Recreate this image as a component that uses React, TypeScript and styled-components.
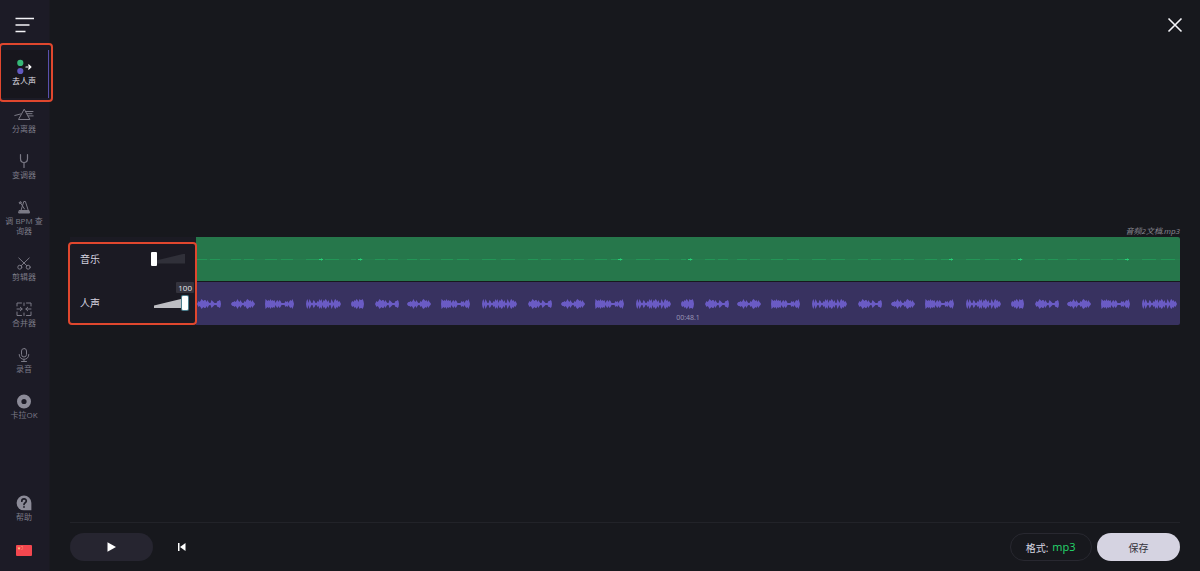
import React, { useState } from "react";
import styled, { createGlobalStyle, css } from "styled-components";

const GlobalStyle = createGlobalStyle`
  *, *::before, *::after { box-sizing: border-box; }
  body {
    margin: 0;
    background: #17181d;
    color: #d6d5e0;
    font-family: "Open Sans", "Noto Sans CJK SC", sans-serif;
  }
  button, select, input { font: inherit; color: inherit; margin: 0; }
  button { padding: 0; border: 0; background: none; cursor: pointer; }
  svg { display: block; }
`;

const Page = styled.div`
  display: grid;
  grid-template-columns: 50px minmax(0, 1fr);
  min-height: 100vh;
`;

const Sidebar = styled.aside`
  display: flex;
  flex-direction: column;
  background: #1c1b26;
  border-right: 1px solid #1a1a21;
`;

const MenuButton = styled.button`
  display: flex;
  align-items: center;
  justify-content: center;
  width: 49px;
  height: 50px;
`;

const Nav = styled.nav`
  display: flex;
  flex-direction: column;
  flex: 1;
`;

const highlightFrame = css`
  &::after {
    content: "";
    position: absolute;
    z-index: 2;
    border: 2px solid #e0472e;
    border-radius: 4px;
    pointer-events: none;
  }
`;

const NavItem = styled.a<{ $active?: boolean }>`
  display: flex;
  flex-direction: column;
  align-items: center;
  gap: 1px;
  min-height: ${(p) => (p.$active ? 48 : 46)}px;
  padding: 9px 5px 10px 4px;
  color: ${(p) => (p.$active ? "#e4e3ec" : "#7b7a86")};
  font-size: 8px;
  line-height: 10px;
  text-align: center;
  text-decoration: none;
  ${(p) =>
    p.$active &&
    css`
      position: relative;
      background: #17161d;
      box-shadow: inset -1px 0 #5a50ac;
      ${highlightFrame}
      &::after {
        inset: -7px -4px -4px -1px;
      }
    `}
`;

const NavBottom = styled.div`
  display: flex;
  flex-direction: column;
  gap: 13px;
  padding-bottom: 15px;
`;

const FlagButton = styled.button`
  display: flex;
  justify-content: center;
  padding-right: 1px;
`;

const Main = styled.main`
  display: flex;
  flex-direction: column;
  padding: 0 20px;
`;

const TopBar = styled.header`
  display: flex;
  align-items: center;
  justify-content: flex-end;
  height: 50px;
`;

const CloseButton = styled.button`
  margin-right: -4px;
`;

const Stage = styled.section`
  display: flex;
  flex: 1;
  flex-direction: column;
  justify-content: center;
  padding-bottom: 23px;
`;

const FileName = styled.div`
  color: #8b8a94;
  font-size: 8px;
  font-style: italic;
  line-height: 12px;
  text-align: right;
`;

const Mixer = styled.div`
  display: grid;
  grid-template-columns: 126px minmax(0, 1fr);
`;

const Controls = styled.div`
  position: relative;
  display: grid;
  grid-template-rows: 44px 43px;
  gap: 1px;
  background: #1b1a23;
  ${highlightFrame}
  &::after {
    inset: 5px -1px 0 -2px;
  }
`;

const ControlRow = styled.div`
  display: flex;
  align-items: center;
  justify-content: space-between;
  padding: 0 8px 0 10px;
  font-size: 10px;
  line-height: 16px;
`;

const VolumeBox = styled.div<{ $lit: boolean }>`
  position: relative;
  width: 37px;
  height: 16px;
  &::before {
    content: "";
    position: absolute;
    inset: 3px;
    background: ${(p) => (p.$lit ? "#bdbdc2" : "#303039")};
    clip-path: polygon(0 75%, 100% 0, 100% 100%, 0 100%);
  }
`;

const VolumeInput = styled.input<{ $lit: boolean }>`
  position: relative;
  display: block;
  width: 100%;
  height: 16px;
  appearance: none;
  background: transparent;
  cursor: pointer;
  &::-webkit-slider-thumb {
    appearance: none;
    width: 6px;
    height: 14px;
    border-radius: 1px;
    background: #ffffff;
    box-shadow: ${(p) => (p.$lit ? "0 0 0 1px #4d7f8e" : "none")};
  }
`;

const VolumeValue = styled.output`
  position: absolute;
  top: -13px;
  right: -6px;
  padding: 0 2px;
  border-radius: 1px;
  background: #34333d;
  color: #e8e8ee;
  font-size: 8px;
  line-height: 11px;
`;

const Tracks = styled.div`
  display: grid;
  grid-template-rows: 44px 43px;
  gap: 1px;
  border-radius: 0 2px 2px 0;
  overflow: hidden;
`;

const Track = styled.div<{ $tone: string }>`
  position: relative;
  background: ${(p) => p.$tone};
  svg {
    width: 100%;
    height: 44px;
  }
`;

const Duration = styled.time`
  position: absolute;
  right: 0;
  bottom: 2px;
  left: 0;
  color: #9c98b8;
  font-size: 7px;
  line-height: 10px;
  text-align: center;
`;

const Footer = styled.footer`
  display: flex;
  align-items: center;
  gap: 5px;
  height: 49px;
  border-top: 1px solid #222329;
`;

const Pill = styled.button<{ $kind: "play" | "save" }>`
  display: flex;
  align-items: center;
  justify-content: center;
  width: 83px;
  height: 28px;
  border-radius: 14px;
  background: ${(p) => (p.$kind === "save" ? "#d5d3e1" : "#262530")};
  color: ${(p) => (p.$kind === "save" ? "#33323c" : "#ffffff")};
  font-size: 10px;
`;

const RewindButton = styled.button`
  margin-left: 19px;
`;

const FormatField = styled.label`
  display: flex;
  align-items: center;
  justify-content: center;
  gap: 4px;
  width: 82px;
  height: 28px;
  margin-left: auto;
  border: 1px solid #282830;
  border-radius: 14px;
  font-size: 10px;
`;

const FormatSelect = styled.select`
  padding: 0;
  border: 0;
  appearance: none;
  background: transparent;
  color: #24d96c;
  font-size: 11px;
  line-height: 16px;
`;

/* Half-heights of the vocal phrases, one value per pixel. */
const PHRASES: Record<string, number[]> = {
  D: [1, 3, 2, 3, 5, 4, 3, 4, 4, 2, 4, 2, 1, 1, 4, 3, 2, 1, 1, 1, 3, 3, 4, 3],
  E: [1, 2, 2, 3, 2, 3, 5, 3, 2, 4, 2, 1, 1, 3, 2, 4, 5, 4, 3, 4, 2, 4, 2, 1],
  F: [5, 4, 3, 4, 3, 5, 3, 4, 3, 4, 1, 3, 4, 2, 4, 3, 1, 1, 1, 1, 3, 2, 3, 1, 3, 4, 3, 5, 2],
  G: [3, 5, 1, 5, 3, 1, 1, 4, 3, 1, 1, 3, 2, 5, 3, 5, 1, 4, 3, 5, 4, 2, 4, 1, 1, 5, 3, 1, 4, 5, 3, 4, 2, 3, 1],
  H: [2, 3, 2, 4, 3, 5, 4, 2, 5, 4, 4, 5, 3],
};

const VOCAL_BURSTS: [string, number][] = [
  ["D", 1], ["E", 35], ["F", 69], ["G", 110], ["H", 155],
  ["D", 179], ["E", 211], ["F", 245], ["G", 286],
  ["D", 332], ["E", 365], ["F", 399], ["G", 440], ["H", 485],
  ["D", 509], ["E", 541], ["F", 575], ["G", 616],
  ["D", 662], ["E", 695], ["F", 729], ["G", 770], ["H", 815],
  ["D", 839], ["E", 871], ["F", 905], ["G", 946],
];

const vocalPath = VOCAL_BURSTS.map(([kind, x]) => {
  const halves = PHRASES[kind];
  const top = halves.map((h, i) => `L${x + i + 0.5} ${22 - h}`).join("");
  const bottom = halves
    .map((h, i) => `L${x + i + 0.5} ${22 + h}`)
    .reverse()
    .join("");
  return `M${x} 22${top}L${x + halves.length} 22${bottom}z`;
}).join("");

const musicPath = VOCAL_BURSTS.map(([kind, x]) => {
  const w = PHRASES[kind].length;
  return `M${x} 22.5h${Math.round(w * 0.4)}M${x + Math.round(w * 0.55)} 22.5h${Math.round(w * 0.4)}`;
}).join("");

const MUSIC_PEAKS = [125, 164, 424, 494, 755, 824, 931];

const stroke = { fill: "none", stroke: "currentColor", strokeWidth: 1, strokeLinecap: "round", strokeLinejoin: "round" } as const;

function Icon({ children }: { children: React.ReactNode }) {
  return (
    <svg width="20" height="16" viewBox="0 0 20 16" aria-hidden="true" {...stroke}>
      {children}
    </svg>
  );
}

const ITEMS: { label: string; icon: React.ReactNode }[] = [
  {
    label: "分离器",
    icon: (
      <>
        <path d="M10 2.500 4.500 12.500h11z" />
        <path d="M.8 8.500 6.500 7M12 4.500H19M13 6.700h5M14.200 8.900h5" />
      </>
    ),
  },
  { label: "变调器", icon: <path d="M6.500 1.500v4c0 2.500 1 4 3.500 4s3.500-1.500 3.500-4v-4M10 9.500v5" strokeWidth="1.200" /> },
  {
    label: "调 BPM 查询器",
    icon: (
      <>
        <path d="M7 11.500 9.800 2.500h1.600l2.900 9M6.300 3.500l4.200 6.500M5.300 3.500l1.400-1 .8 1.200-1.400.9z" />
        <path d="M5.500 11.500h9.500l.5 2.500H5z" fill="currentColor" />
      </>
    ),
  },
  {
    label: "剪辑器",
    icon: (
      <>
        <circle cx="5.800" cy="12.200" r="2" />
        <circle cx="14.200" cy="12.200" r="2" />
        <path d="M7.200 10.700 15.200 3M12.800 10.700 4.800 3" />
      </>
    ),
  },
  {
    label: "合并器",
    icon: (
      <>
        <path d="M3 5V2h4.500M12.500 2H17v3M3 11v3.500h4.500M12.500 14.500H17V11M10 2v2.500M10 12v2.500" />
        <path d="M3 8h5M6.300 6.200 8.200 8 6.300 9.800M17 8h-5M13.700 6.200 11.800 8l1.900 1.800" />
      </>
    ),
  },
  {
    label: "录音",
    icon: (
      <>
        <rect x="7.500" y="1.500" width="5" height="8.500" rx="2.500" />
        <path d="M5.200 7.500c0 3 2 4.800 4.800 4.800s4.800-1.800 4.800-4.800M10 12.500v2M7.500 14.500h5" />
      </>
    ),
  },
  { label: "卡拉OK", icon: <circle cx="10" cy="8.500" r="4.800" strokeWidth="4.400" stroke="#8c8b98" /> },
];

function Volume({ id, label, initial }: { id: string; label: string; initial: number }) {
  const [value, setValue] = useState(initial);
  const lit = value > 0;
  return (
    <ControlRow>
      <label htmlFor={id}>{label}</label>
      <VolumeBox $lit={lit}>
        <VolumeInput
          id={id}
          type="range"
          min={0}
          max={100}
          value={value}
          $lit={lit}
          onChange={(e) => setValue(Number(e.target.value))}
        />
        {lit && <VolumeValue htmlFor={id}>{value}</VolumeValue>}
      </VolumeBox>
    </ControlRow>
  );
}

export default function App() {
  return (
    <>
      <GlobalStyle />
      <Page>
        <Sidebar>
          <MenuButton aria-label="菜单">
            <svg width="19" height="16" viewBox="0 0 19 16" fill="none" stroke="#f4f4f8" strokeWidth="1.500">
              <path d="M.5 1.500h18.500M.5 8h14M.5 14.500h10" />
            </svg>
          </MenuButton>
          <Nav>
            <NavItem href="#vocal-remover" $active aria-current="page">
              <Icon>
                <circle cx="6.300" cy="3.900" r="3.100" fill="#36b878" stroke="none" />
                <circle cx="6.300" cy="12" r="3.100" fill="#6259c0" stroke="none" />
                <path d="M12 8h4.500M14.700 6l2.200 2-2.200 2" stroke="#ffffff" strokeWidth="1.200" />
              </Icon>
              去人声
            </NavItem>
            {ITEMS.map((item) => (
              <NavItem key={item.label} href="#tool">
                <Icon>{item.icon}</Icon>
                {item.label}
              </NavItem>
            ))}
          </Nav>
          <NavBottom>
            <NavItem href="#help">
              <Icon>
                <path d="M10 .5a7.400 7.400 0 1 0 0 14.800h7.400V7.900A7.400 7.400 0 0 0 10 .5z" fill="#8c8b98" stroke="none" />
                <path d="M7.800 6.200c0-3 4.500-3 4.500-.2 0 1.700-2.300 1.700-2.300 3.400M10 11.800v.3" stroke="#1c1b26" strokeWidth="1.700" />
              </Icon>
              帮助
            </NavItem>
            <FlagButton aria-label="语言">
              <svg width="16" height="11" viewBox="0 0 16 11">
                <rect width="16" height="11" rx="1" fill="#f3474f" />
                <path d="M3 1.500l.5 1.200h1.300l-1 .8.4 1.300L3 4l-1.200.8.4-1.300-1-.8h1.300z" fill="#ffc37a" />
                <path d="M5.500 1h1v1h-1zM6.300 2.600h.8v.8h-.8zM5.500 4.300h.8v.8h-.8z" fill="#ffa070" />
              </svg>
            </FlagButton>
          </NavBottom>
        </Sidebar>
        <Main>
          <TopBar>
            <CloseButton aria-label="关闭">
              <svg width="18" height="18" viewBox="0 0 18 18" fill="none" stroke="#f4f4f8" strokeWidth="1.600">
                <path d="M2.500 2.500l13 13M15.500 2.500l-13 13" />
              </svg>
            </CloseButton>
          </TopBar>
          <Stage>
            <FileName>音频2文档.mp3</FileName>
            <Mixer>
              <Controls>
                <Volume id="music-volume" label="音乐" initial={0} />
                <Volume id="vocal-volume" label="人声" initial={100} />
              </Controls>
              <Tracks>
                <Track $tone="#26774b">
                  <svg viewBox="0 0 984 44" preserveAspectRatio="none" aria-hidden="true">
                    <path d="M0 22.500h984" stroke="#257f4e" strokeWidth="1" />
                    <path d={musicPath} stroke="#239657" strokeWidth="1" />
                    {MUSIC_PEAKS.map((x) => (
                      <path key={x} d={`M${x - 2} 22h4v1h-4zM${x} 21.500h1v2h-1z`} fill="#27cf77" />
                    ))}
                  </svg>
                </Track>
                <Track $tone="#383260">
                  <svg viewBox="0 0 984 44" preserveAspectRatio="none" aria-hidden="true">
                    <path d={vocalPath} fill="#6a5bc4" />
                  </svg>
                  <Duration>00:48.1</Duration>
                </Track>
              </Tracks>
            </Mixer>
          </Stage>
          <Footer>
            <Pill $kind="play" aria-label="播放">
              <svg width="10" height="12" viewBox="0 0 10 12">
                <path d="M.5 1.200l8.500 4.800L.5 10.800z" fill="#ffffff" />
              </svg>
            </Pill>
            <RewindButton aria-label="回到开头">
              <svg width="10" height="10" viewBox="0 0 10 10">
                <path d="M1 1h1.500v8H1zM8.500 1v8L3 5z" fill="#ffffff" />
              </svg>
            </RewindButton>
            <FormatField>
              格式:
              <FormatSelect defaultValue="mp3">
                <option value="mp3">mp3</option>
              </FormatSelect>
            </FormatField>
            <Pill $kind="save">保存</Pill>
          </Footer>
        </Main>
      </Page>
    </>
  );
}
